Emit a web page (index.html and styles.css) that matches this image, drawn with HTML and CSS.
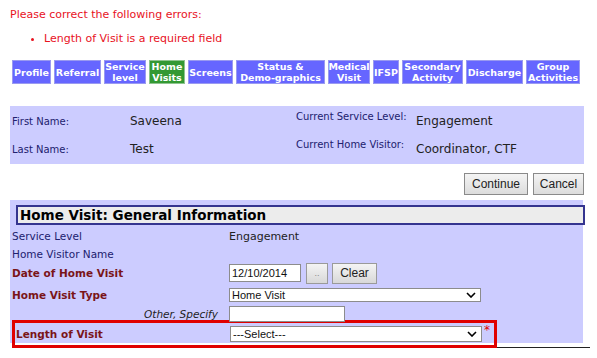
FILE: index.html
```html
<!DOCTYPE html>
<html>
<head>
<meta charset="utf-8">
<link rel="stylesheet" href="styles.css">
</head>
<body>
<div class="errors">
  <div class="err-title">Please correct the following errors:</div>
  <ul class="err-list"><li>Length of Visit is a required field</li></ul>
</div>
<div class="tabs">
  <div class="tab" style="width:39px">Profile</div>
  <div class="tab" style="width:47px">Referral</div>
  <div class="tab" style="width:42px">Service<br>level</div>
  <div class="tab active" style="width:36px">Home<br>Visits</div>
  <div class="tab" style="width:45px">Screens</div>
  <div class="tab" style="width:89px">Status &amp;<br>Demo-graphics</div>
  <div class="tab" style="width:42px">Medical<br>Visit</div>
  <div class="tab" style="width:26px">IFSP</div>
  <div class="tab" style="width:61px">Secondary<br>Activity</div>
  <div class="tab" style="width:57px">Discharge</div>
  <div class="tab" style="width:54px">Group<br>Activities</div>
</div>
<div class="info">
  <div class="info-row">
    <div class="lbl">First Name:</div><div class="val">Saveena</div>
    <div class="lbl2">Current Service Level:</div><div class="val2">Engagement</div>
  </div>
  <div class="info-row">
    <div class="lbl">Last Name:</div><div class="val">Test</div>
    <div class="lbl2">Current Home Visitor:</div><div class="val2">Coordinator, CTF</div>
  </div>
</div>
<div class="actions">
  <button class="btn btn-continue">Continue</button>
  <button class="btn btn-cancel">Cancel</button>
</div>
<div class="form">
  <div class="form-head">Home Visit: General Information</div>
  <div class="row r-plain r-first"><div class="flbl">Service Level</div><div class="fval">Engagement</div></div>
  <div class="row r-plain"><div class="flbl">Home Visitor Name</div><div class="fval"></div></div>
  <div class="row r-date"><div class="flbl req">Date of Home Visit</div>
    <div class="fval ctrls"><span class="input date">12/10/2014</span><button class="sbtn dots">..</button><button class="sbtn clear">Clear</button></div></div>
  <div class="row r-type"><div class="flbl req">Home Visit Type</div>
    <div class="fval"><span class="select">Home Visit<svg class="chev" viewBox="0 0 10 6" width="10" height="6"><path d="M1 1 L5 5 L9 1" fill="none" stroke="#000" stroke-width="1.6"/></svg></span></div></div>
  <div class="row r-other"><div class="flbl other">Other, Specify</div>
    <div class="fval"><span class="input other-in"></span></div></div>
  <div class="row r-len"><div class="flbl req">Length of Visit</div>
    <div class="fval"><span class="select">---Select---<svg class="chev" viewBox="0 0 10 6" width="10" height="6"><path d="M1 1 L5 5 L9 1" fill="none" stroke="#000" stroke-width="1.6"/></svg></span><span class="star">*</span></div></div>
</div>
<div class="endline"></div>
</body>
</html>
```
FILE: styles.css
```css
html, body { margin: 0; padding: 0; background: #fff; }
body { font-family: "DejaVu Sans", Verdana, sans-serif; width: 597px; height: 358px; overflow: hidden; position: relative; }

.errors { color: #e8121e; font-size: 11px; padding: 7px 0 0 10px; height: 53px; box-sizing: border-box; }
.err-title { line-height: 15px; }
.err-list { margin: 9px 0 0 0; padding: 0 0 0 34px; line-height: 15px; }
.err-list li { list-style: disc; }

.tabs { display: flex; gap: 3px; margin: 7px 0 0 12px; height: 24px; }
.tab { background: #6666ff; color: #fff; font-weight: bold; font-size: 9.5px; line-height: 11px; text-align: center; display: flex; align-items: center; justify-content: center; border: 1px solid #9a9af0; box-sizing: border-box; height: 24px; }
.tab.active { background: #339933; border-color: #8fc48f; }

.info { background: #ccccff; margin: 22px 0 0 10px; width: 574px; height: 58px; box-sizing: border-box; padding: 5px 0 0 2px; }
.info-row { display: flex; height: 28px; }
.lbl { width: 118px; color: #21216e; font-size: 10px; padding-top: 5px; }
.val { width: 166px; color: #222; font-size: 12px; padding-top: 3px; }
.lbl2 { width: 120px; color: #21216e; font-size: 10px; padding-top: 0; line-height: 11px; }
.val2 { color: #222; font-size: 12px; padding-top: 3px; }

.actions { display: flex; justify-content: flex-end; gap: 5px; margin: 9px 13px 0 0; height: 22px; }
.btn { font-family: "Liberation Sans", Arial, sans-serif; font-size: 12px; color: #222; background: linear-gradient(#f4f4f4, #dcdcdc); border: 1px solid #8a8a8a; padding: 0; height: 22px; }
.btn-continue { width: 64px; }
.btn-cancel { width: 51px; }

.form { background: #ccccff; margin: 5px 0 0 10px; width: 573px; height: 143px; box-sizing: border-box; padding: 5px 0 0 0; }
.form-head { margin: 0 -2px 0 6px; height: 20px; box-sizing: border-box; border: 2px solid #34348f; background: #ececec; color: #000; font-weight: bold; font-size: 13.5px; line-height: 16px; padding-left: 2px; }
.row { display: flex; align-items: center; padding-left: 2px; }
.flbl { width: 217px; font-size: 10.5px; color: #21216e; flex: none; }
.flbl.req { color: #7a1418; font-weight: bold; }
.flbl.other { color: #222; font-style: italic; text-align: right; box-sizing: border-box; padding-right: 11px; }
.fval { font-size: 11px; color: #222; display: flex; align-items: center; }
.r-plain { height: 18px; }
.r-first { margin-top: 2px; }
.r-date { height: 20px; }
.r-type { height: 23px; }
.r-other { height: 16px; }
.r-len { height: 28px; margin: -2px 0 0 2px; width: 485px; box-sizing: border-box; border: 3px solid #e00000; padding-left: 1px; }
.r-len .flbl { width: 214px; }

.input { display: inline-block; box-sizing: border-box; background: #fff; border: 1px solid #8c8c8c; height: 18px; font-family: "Liberation Sans", Arial, sans-serif; font-size: 11px; line-height: 16px; padding-left: 2px; color: #111; }
.date { width: 72px; }
.other-in { width: 116px; height: 16px; }
.sbtn { font-family: "Liberation Sans", Arial, sans-serif; background: linear-gradient(#f4f4f4, #d8d8d8); border: 1px solid #9a9a9a; height: 21px; padding: 0; color: #222; margin-left: 5px; }
.dots { width: 22px; font-size: 9px; color: #888; }
.clear { width: 45px; font-size: 12px; margin-left: 4px; }
.select { display: inline-flex; align-items: center; justify-content: space-between; box-sizing: border-box; width: 252px; height: 14px; background: #fff; border: 1px solid #8c8c8c; font-family: "Liberation Sans", Arial, sans-serif; font-size: 11px; color: #111; padding: 0 4px 0 2px; }
.r-len .select { height: 16px; }
.chev { display: block; }
.star { color: #e00000; font-size: 12px; align-self: flex-start; margin: -1px 0 0 2px; line-height: 10px; }

.endline { position: absolute; left: 497px; top: 347px; width: 93px; border-top: 1px solid #222; }
```
